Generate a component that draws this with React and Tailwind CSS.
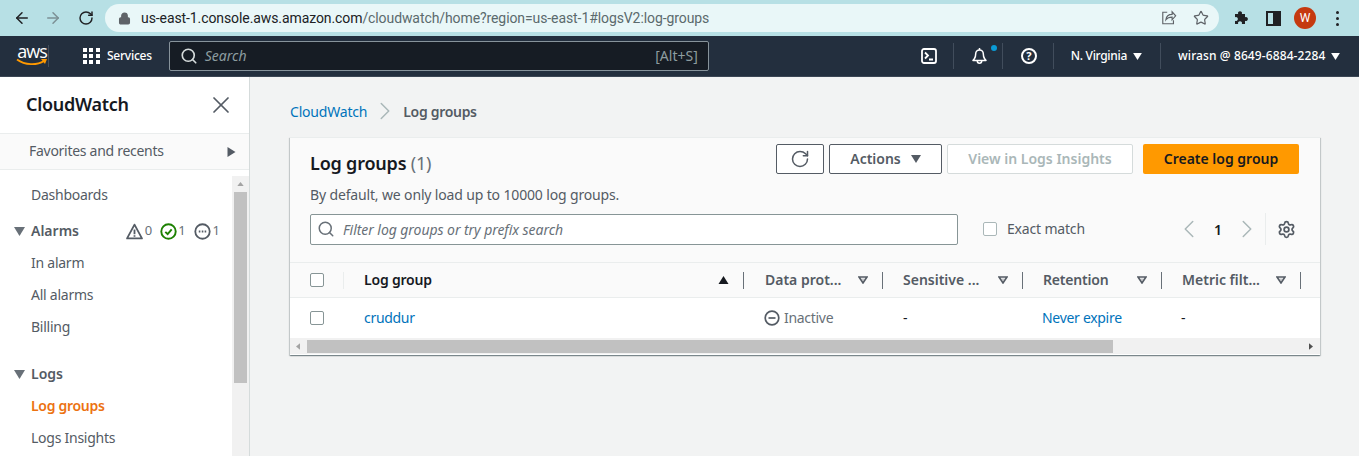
import React from "react";
import { ArrowLeft, ArrowRight, RotateCw, Lock, Star, Search, X, ChevronLeft, ChevronRight, Settings } from "lucide-react";

const Caret = ({ className = "" }) => (
  <svg viewBox="0 0 10 8" className={className}>
    <path d="M0 0h10L5 8z" fill="currentColor" />
  </svg>
);

const FilterCaret = () => (
  <svg viewBox="0 0 10 8" className="w-[10px] h-[8px] text-[#545b64]">
    <path d="M1 1h8L5 7z" fill="none" stroke="currentColor" strokeWidth="1.6" />
    <path d="M3 2.5h4L5 5.5z" fill="currentColor" opacity="0.3" />
  </svg>
);

const Sep = () => <div className="w-px h-[26px] bg-[#414d5c]" />;

const Checkbox = () => <div className="w-[14px] h-[14px] rounded-[2px] border border-[#879596] bg-white" />;

const Browser = () => (
  <div className="h-[36px] bg-[#b7e0e5] flex items-center text-[#202124]">
    <div className="w-[105px] flex items-center shrink-0">
      <ArrowLeft size={18} strokeWidth={2} className="ml-[13px]" />
      <ArrowRight size={18} strokeWidth={2} className="ml-[13px] text-[#7c9095]" />
      <RotateCw size={16} strokeWidth={2.2} className="ml-[16px]" />
    </div>
    <div className="w-[1114px] h-[28px] rounded-full bg-[#e9f7f8] flex items-center pl-[13px] pr-[10px]">
      <Lock size={13} strokeWidth={2.4} className="text-[#5f6368] fill-[#5f6368]" />
      <span className="ml-[10px] text-[14px] font-['Roboto',sans-serif] text-[#5b6a6d] tracking-[-0.09px]">
        <span className="text-[#202124]">us-east-1.console.aws.amazon.com</span>/cloudwatch/home?region=us-east-1#logsV2:log-groups
      </span>
      <div className="ml-auto flex items-center gap-[16px] text-[#5f6368]">
        <svg viewBox="0 0 18 18" className="w-[16px] h-[16px]" fill="none" stroke="currentColor" strokeWidth="1.3">
          <path d="M7 2.5H2v13h12v-4" />
          <path d="M5.5 11c.5-4 3.5-6 7-6V2l4 4.5-4 4.5V8c-3 0-5.5 1-7 3z" />
        </svg>
        <Star size={16} strokeWidth={1.8} />
      </div>
    </div>
    <div className="flex-1 flex items-center pl-[15px]">
      <svg viewBox="0 0 16 16" className="w-[16px] h-[16px]">
        <path d="M1 4h3.2a2 2 0 1 1 3.6 0H11v3.2a2 2 0 1 1 0 3.6V14H7.800a2 2 0 1 0-3.600 0H1v-3.200a2 2 0 1 0 0-3.600z" fill="#202124" />
      </svg>
      <div className="ml-[16px] w-[15px] h-[15px] border-2 border-[#202124] flex justify-end">
        <div className="w-[6px] h-full bg-[#202124]" />
      </div>
      <div className="ml-[13px] w-[22px] h-[22px] rounded-full bg-[#c5390f] text-white text-[12px] flex items-center justify-center font-['Roboto',sans-serif]">W</div>
      <div className="ml-[20px] flex flex-col gap-[3px]">
        <div className="w-[3px] h-[3px] rounded-full bg-[#202124]" />
        <div className="w-[3px] h-[3px] rounded-full bg-[#202124]" />
        <div className="w-[3px] h-[3px] rounded-full bg-[#202124]" />
      </div>
    </div>
  </div>
);

const Nav = () => (
  <div className="h-[41px] bg-[#232f3e] flex items-center text-white border-b border-[#3b4654]">
    <div className="w-[47px] pl-[17px] flex flex-col items-center shrink-0">
      <span className="text-[18px] leading-[13px] font-['Open_Sans',sans-serif] tracking-[-1px]">aws</span>
      <svg viewBox="0 0 32 9" className="w-[32px] h-[9px] text-[#ff9900]">
        <path d="M1 1.500c8 6 20 6 27 1.500" fill="none" stroke="currentColor" strokeWidth="1.800" />
        <path d="M25 1h6l-2 5z" fill="currentColor" />
      </svg>
    </div>
    <div className="w-px h-[22px] bg-[#414d5c] ml-px" />
    <div className="grid grid-cols-3 gap-[2px] ml-[34px] w-[17px]">
      {[...Array(9)].map((_, i) => <div key={i} className="w-[4px] h-[4px] bg-white" />)}
    </div>
    <span className="ml-[7px] text-[12px] font-medium whitespace-nowrap tracking-[-0.25px]">Services</span>
    <div className="ml-[17px] w-[540px] h-[30px] bg-[#161c24] border border-[#87939b] rounded-[2px] flex items-center pl-[10px] pr-[10px]">
      <Search size={18} strokeWidth={2.2} className="text-[#d5dbdb]" />
      <span className="ml-[7px] pb-[2px] text-[14px] italic text-[#8d9da0]">Search</span>
      <span className="ml-auto pb-[2px] text-[14px] text-[#8d9da0]">[Alt+S]</span>
    </div>
    <div className="ml-[212px] flex items-center">
      <svg viewBox="0 0 16 16" className="w-[16px] h-[16px]" fill="none" stroke="currentColor" strokeWidth="1.800">
        <rect x="1" y="1" width="14" height="14" rx="2" />
        <path d="M4 4.500 7 7.500 4 10.500M8 11.500h4" />
      </svg>
      <div className="ml-[16px] mr-[17px]"><Sep /></div>
      <div className="relative">
        <svg viewBox="0 0 17 17" className="w-[17px] h-[17px]" fill="none" stroke="currentColor" strokeWidth="1.500" strokeLinejoin="round">
          <path d="M8.500 0v2" />
          <path d="M3.500 10.500c1-1.500 1.200-3 1.200-4.700a3.800 3.800 0 0 1 7.600 0c0 1.700.2 3.200 1.200 4.700l1.500 2H2z" />
          <path d="M6.300 13a2.200 2.200 0 0 0 4.400 0" />
        </svg>
        <div className="absolute -top-[3px] -right-[9px] w-[6px] h-[6px] rounded-full bg-[#0a9bd6]" />
      </div>
      <div className="ml-[14px] mr-[18px]"><Sep /></div>
      <div className="w-[16px] h-[16px] rounded-full border-2 border-white flex items-center justify-center text-[11px] font-bold">?</div>
      <div className="ml-[16px] mr-[17px]"><Sep /></div>
      <span className="text-[12px] font-medium whitespace-nowrap tracking-[-0.3px]">N. Virginia</span>
      <Caret className="w-[9px] h-[7px] ml-[6px]" />
      <div className="ml-[18px] mr-[17px]"><Sep /></div>
      <span className="text-[12px] font-medium whitespace-nowrap tracking-[0.1px]">wirasn @ 8649-6884-2284</span>
      <Caret className="w-[9px] h-[7px] ml-[6px]" />
    </div>
  </div>
);

const SideLink = ({ children, active }) => (
  <div className={active ? "h-[32px] pb-[2px] flex items-center pl-[31px] text-[14px] font-semibold text-[#ec7211] tracking-[-0.3px]" : "h-[32px] pb-[2px] flex items-center pl-[31px] text-[14px] text-[#545b64] tracking-[-0.25px]"}>
    {children}
  </div>
);

const Sidebar = () => (
  <div className="w-[250px] shrink-0 bg-white border-r border-[#d5dbdb] flex flex-col overflow-hidden">
    <div className="h-[57px] flex items-center justify-between pl-[26px] pr-[14px] border-b border-[#eaeded] shrink-0">
      <span className="pb-[2px] text-[18px] font-semibold text-[#16191f] tracking-[-0.3px]">CloudWatch</span>
      <X size={28} strokeWidth={1.5} className="text-[#545b64]" />
    </div>
    <div className="h-[36px] flex items-center justify-between pl-[29px] pr-[13px] bg-[#fafafa] border-b border-[#eaeded] shrink-0">
      <span className="pb-[2px] text-[14px] text-[#545b64] tracking-[-0.28px]">Favorites and recents</span>
      <svg viewBox="0 0 8 10" className="w-[9px] h-[10px] text-[#545b64]"><path d="M0 0l8 5-8 5z" fill="currentColor" /></svg>
    </div>
    <div className="flex flex-1 min-h-0">
      <div className="flex-1 pt-[9px]">
        <SideLink>Dashboards</SideLink>
        <div className="mt-[4px] h-[32px] flex items-center pl-[14px] pr-[12px] text-[#545b64]">
          <Caret className="w-[11px] h-[9px] text-[#687078]" />
          <span className="ml-[6px] pb-[2px] text-[14px] font-semibold">Alarms</span>
          <div className="ml-auto flex items-center text-[13px] text-[#687078]">
            <svg viewBox="0 0 16 16" className="w-[17px] h-[17px]" fill="none" stroke="#545b64" strokeWidth="1.700">
              <path d="M8 1.500 15 14.500H1z" strokeLinejoin="round" />
              <path d="M8 6v4.500M8 11.500v1.500" />
            </svg>
            <span className="ml-[2px] mr-px">0</span>
            <svg viewBox="0 0 16 16" className="w-[17px] h-[17px] ml-[7px]" fill="none" stroke="#1d8102" strokeWidth="1.800">
              <circle cx="8" cy="8" r="6.800" />
              <path d="M5 8.300 7.200 10.500 11 6" />
            </svg>
            <span className="ml-[1px]">1</span>
            <svg viewBox="0 0 16 16" className="w-[17px] h-[17px] ml-[8px]" fill="none" stroke="#545b64" strokeWidth="1.700">
              <circle cx="8" cy="8" r="6.800" />
              <path d="M4.500 8h1.500M7.300 8h1.500M10 8h1.500" />
            </svg>
            <span className="ml-[2px]">1</span>
          </div>
        </div>
        <SideLink>In alarm</SideLink>
        <SideLink>All alarms</SideLink>
        <SideLink>Billing</SideLink>
        <div className="mt-[15px] h-[32px] flex items-center pl-[14px] text-[#545b64]">
          <Caret className="w-[11px] h-[9px] text-[#687078]" />
          <span className="ml-[6px] pb-[2px] text-[14px] font-semibold">Logs</span>
        </div>
        <SideLink active>Log groups</SideLink>
        <SideLink>Logs Insights</SideLink>
      </div>
      <div className="w-[17px] bg-[#f1f1f1] flex flex-col items-center mt-[6px]">
        <svg viewBox="0 0 8 5" className="w-[7px] h-[4px] mt-[6px] text-[#a3a3a3]"><path d="M4 0l4 5H0z" fill="currentColor" /></svg>
        <div className="w-[13px] h-[191px] bg-[#c1c1c1] mt-[6px]" />
      </div>
    </div>
  </div>
);

const HeadCell = ({ label, width, track, pl }) => (
  <div className={`${width} ${pl || "pl-[20px]"} flex items-center justify-between pr-[14px] h-full`}>
    <span className={`pb-[2px] text-[14px] font-semibold text-[#545b64] whitespace-nowrap ${track || ""}`}>{label}</span>
    <FilterCaret />
  </div>
);

const Divider = () => <div className="w-px h-[17px] bg-[#687078] shrink-0" />;

const Card = () => (
  <div className="w-[1030px] h-[218px] mt-[16px] bg-white shadow-[0_1px_1px_0_rgba(0,28,36,0.3),1px_1px_1px_0_rgba(0,28,36,0.15),-1px_1px_1px_0_rgba(0,28,36,0.15)] border-t border-[#eaeded]">
    <div className="bg-[#fafafa] h-[125px] pl-[20px] pr-[21px] pt-[6px] border-b border-[#eaeded]">
      <div className="flex items-start">
        <div className="pt-[7px] text-[18px] leading-[24px] font-semibold text-[#16191f] tracking-[-0.2px]">
          Log groups <span className="font-normal text-[#687078]">(1)</span>
        </div>
        <div className="ml-auto flex items-center text-[14px] font-semibold">
          <div className="w-[48px] h-[30px] border border-[#545b64] rounded-[2px] bg-white flex items-center justify-center">
            <RotateCw size={20} strokeWidth={1.8} className="text-[#545b64]" />
          </div>
          <div className="ml-[5px] w-[113px] h-[30px] pb-[2px] border border-[#545b64] rounded-[2px] bg-white flex items-center justify-center gap-[10px] text-[#545b64]">
            Actions
            <Caret className="w-[10px] h-[8px] mt-[2px]" />
          </div>
          <div className="ml-[5px] w-[186px] h-[30px] pb-[2px] border border-[#d5dbdb] rounded-[2px] bg-white flex items-center justify-center text-[#aab7b8]">
            View in Logs Insights
          </div>
          <div className="ml-[10px] w-[156px] h-[30px] pb-[2px] rounded-[2px] bg-[#ff9900] flex items-center justify-center text-[#16191f]">
            Create log group
          </div>
        </div>
      </div>
      <div className="mt-[10px] text-[14px] leading-[20px] text-[#545b64] tracking-[-0.15px]">By default, we only load up to 10000 log groups.</div>
      <div className="mt-[8px] flex items-center">
        <div className="w-[648px] h-[31px] bg-white border border-[#879596] rounded-[2px] flex items-center pl-[6px]">
          <Search size={18} strokeWidth={2} className="text-[#687078]" />
          <span className="ml-[8px] text-[14px] italic text-[#687078] tracking-[-0.06px]">Filter log groups or try prefix search</span>
        </div>
        <div className="ml-[25px] w-[14px] h-[14px] rounded-[2px] border border-[#aab7b8] bg-white" />
        <span className="ml-[10px] pb-[2px] text-[14px] text-[#545b64] tracking-[-0.18px]">Exact match</span>
        <div className="ml-auto flex items-center">
          <ChevronLeft size={30} strokeWidth={1.2} className="text-[#aab7b8]" />
          <span className="mx-[10px] text-[14px] font-semibold text-[#16191f]">1</span>
          <ChevronRight size={30} strokeWidth={1.2} className="text-[#aab7b8]" />
          <div className="ml-[3px] w-px h-[32px] bg-[#eaeded]" />
          <Settings size={19} strokeWidth={2.2} className="ml-[11px] mr-[3px] text-[#545b64]" />
        </div>
      </div>
    </div>
    <div className="h-[35px] bg-[#fafafa] border-b border-[#eaeded] flex items-center">
      <div className="w-[53px] flex items-center pl-[20px] shrink-0"><Checkbox /></div>
      <div className="w-px h-[17px] bg-[#eaeded] shrink-0" />
      <div className="w-[399px] flex items-center justify-between pl-[20px] pr-[14px] shrink-0">
        <span className="pb-[2px] text-[14px] font-semibold text-[#16191f] tracking-[-0.2px]">Log group</span>
        <Caret className="w-[11px] h-[8px] text-[#16191f] rotate-180" />
      </div>
      <Divider />
      <HeadCell label="Data prot..." width="w-[138px]" pl="pl-[21px]" />
      <Divider />
      <HeadCell label="Sensitive ..." width="w-[139px]" />
      <Divider />
      <HeadCell label="Retention" width="w-[138px]" track="tracking-[-0.2px]" />
      <Divider />
      <HeadCell label="Metric filt..." width="w-[138px]" />
      <Divider />
    </div>
    <div className="h-[40px] pb-[2px] bg-white flex items-center text-[14px] tracking-[-0.3px]">
      <div className="w-[74px] flex items-center pt-[2px] pl-[20px] shrink-0"><Checkbox /></div>
      <div className="w-[400px] text-[#0073bb] shrink-0">cruddur</div>
      <div className="w-[139px] flex items-center gap-[4px] text-[#687078] shrink-0">
        <svg viewBox="0 0 16 16" className="w-[16px] h-[16px] mt-[2px]" fill="none" stroke="#545b64" strokeWidth="1.700">
          <circle cx="8" cy="8" r="6.800" />
          <path d="M4.500 8h7" />
        </svg>
        Inactive
      </div>
      <div className="w-[139px] text-[#16191f] shrink-0">-</div>
      <div className="w-[139px] text-[#0073bb] shrink-0">Never expire</div>
      <div className="text-[#16191f]">-</div>
    </div>
    <div className="h-[16px] bg-[#f1f1f1] flex items-center">
      <svg viewBox="0 0 5 8" className="ml-[6px] w-[4px] h-[7px] text-[#a3a3a3]"><path d="M5 0v8L0 4z" fill="currentColor" /></svg>
      <div className="ml-[7px] w-[806px] h-[13px] bg-[#c1c1c1]" />
      <svg viewBox="0 0 5 8" className="ml-auto mr-[7px] w-[4px] h-[7px] text-[#505050]"><path d="M0 0v8l5-4z" fill="currentColor" /></svg>
    </div>
  </div>
);

export default function App() {
  return (
    <div className="w-[1359px] h-[456px] overflow-hidden flex flex-col font-['Noto_Sans',sans-serif] bg-[#f2f3f3]">
      <Browser />
      <Nav />
      <div className="flex flex-1 min-h-0">
        <Sidebar />
        <div className="flex-1 pl-[40px] pt-[24px]">
          <div className="h-[20px] flex items-center text-[14px]">
            <span className="text-[#0073bb] tracking-[-0.2px]">CloudWatch</span>
            <ChevronRight size={30} strokeWidth={1.2} className="mx-[3px] text-[#aab7b8]" />
            <span className="font-semibold text-[#545b64] tracking-[-0.3px]">Log groups</span>
          </div>
          <Card />
        </div>
      </div>
    </div>
  );
}
